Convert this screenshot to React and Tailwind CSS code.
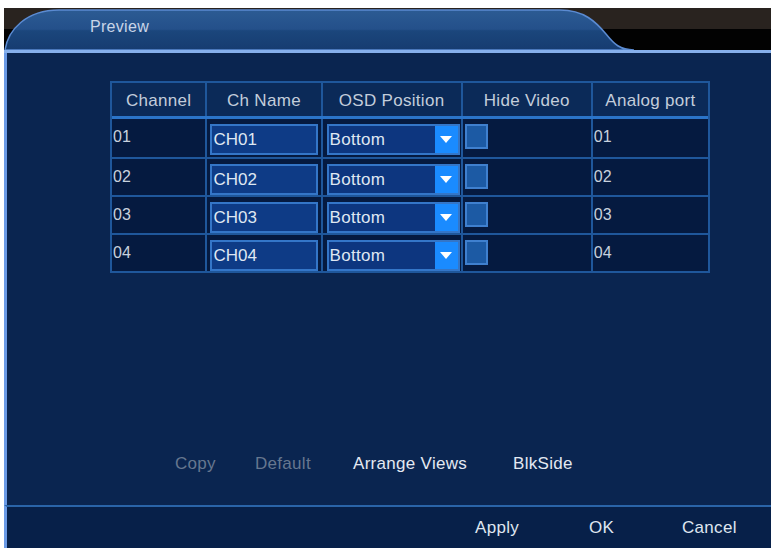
import React from 'react';

// ── Table data ─────────────────────────────────────────
const COLUMNS = [
  { label: 'Channel', w: 'w-[94px]' },
  { label: 'Ch Name', w: 'w-[116px]' },
  { label: 'OSD Position', w: 'w-[141px]' },
  { label: 'Hide Video', w: 'w-[131px]' },
  { label: 'Analog port', w: 'w-[118px]' },
];

const ROWS = ['01', '02', '03', '04'];

function TabHeader() {
  return (
    <div className="relative h-[42px] bg-[#020202]">
      {/* tab drawing */}
      <svg className="absolute inset-0" width="767" height="42" viewBox="0 0 767 42">
        <defs>
          <linearGradient id="tabFill" x1="0" y1="0" x2="0" y2="1">
            <stop offset="0" stopColor="#2c5b93" />
            <stop offset="0.48" stopColor="#24508a" />
            <stop offset="0.52" stopColor="#1b467c" />
            <stop offset="1" stopColor="#163c70" />
          </linearGradient>
        </defs>
        <rect x="0" y="0" width="767" height="21" fill="#29231f" />
        <path
          d="M1,42 C4,22 22,2 55,2 L556,2 C580,2 592,14 602,26 C610,36 616,42 630,42 Z"
          fill="url(#tabFill)"
          stroke="#5b8bd2"
          strokeWidth="1.5"
        />
      </svg>
      <div className="relative pl-[86px] pt-[11px] text-[16px] leading-none tracking-[0.3px] text-[#c9d5e8]">
        Preview
      </div>
    </div>
  );
}

function NameInput({ value }) {
  return (
    <div className="ml-[3px] mt-[5px] flex h-[31px] w-[108px] items-center border-2 border-[#3476c8] bg-[#0e3b86] pl-[1px] text-[17px] text-[#dfe7f2]">
      {value}
    </div>
  );
}

function OsdSelect() {
  return (
    <div className="ml-[4px] mt-[5px] flex h-[31px] w-[133px] border-2 border-[#3476c8] bg-[#0d367f]">
      <span className="flex-1 self-center pl-[1px] text-[17px] tracking-[0.3px] text-[#dfe7f2]">Bottom</span>
      <span className="flex w-[23px] items-center justify-center bg-[#1a8bff]">
        <svg width="12" height="8" viewBox="0 0 12 8">
          <path d="M0,0 L12,0 L6,7 Z" fill="#ffffff" />
        </svg>
      </span>
    </div>
  );
}

function CheckBox() {
  return <div className="ml-[2px] mt-[5px] h-[25px] w-[23px] border-2 border-[#3f80cf] bg-[#1c5aa4]" />;
}

export default function App() {
  return (
    <div
      className="flex h-[548px] w-[773px] flex-col overflow-hidden bg-white pl-[4px] pr-[2px] pt-[8px]"
      style={{ fontFamily: '"Liberation Sans", Arial, sans-serif' }}
    >
      <TabHeader />
      <div className="h-[3px] bg-[#86b0ec]" />

      {/* Body */}
      <div className="flex flex-1 flex-col border-l-[3px] border-[#6a9ae6] bg-[#0a2550]">
        {/* Table */}
        <div className="ml-[103px] mt-[28px] w-[600px] border-2 border-[#1f579b]">
          <div className="flex h-[36px] border-b-[3px] border-[#2b74c8] bg-[#0b2a58]">
            {COLUMNS.map((c, i) => (
              <div
                key={c.label}
                className={`${c.w} flex items-center justify-center pt-[2px] text-[17px] tracking-[0.3px] text-[#c3cddb] ${i > 0 ? 'border-l-2 border-[#1f579b]' : ''}`}
              >
                {c.label}
              </div>
            ))}
          </div>
          {ROWS.map((n, r) => (
            <div key={n} className={`flex h-[38px] bg-[#051a40] ${r > 0 ? 'border-t-2 border-[#1f579b]' : ''}`}>
              <div className="w-[94px] pl-[1px] pt-[6px] text-[16px] text-[#c8d1de]">{n}</div>
              <div className="w-[116px] border-l-2 border-[#1f579b]">
                <NameInput value={`CH${n}`} />
              </div>
              <div className="w-[141px] border-l-2 border-[#1f579b]">
                <OsdSelect />
              </div>
              <div className="w-[131px] border-l-2 border-[#1f579b]">
                <CheckBox />
              </div>
              <div className="w-[118px] border-l-2 border-[#1f579b] pl-[1px] pt-[6px] text-[16px] text-[#c8d1de]">{n}</div>
            </div>
          ))}
        </div>

        {/* Action buttons */}
        <div className="mt-auto mb-[21px] flex h-[40px] items-center pl-[168px] text-[17px] tracking-[0.3px]">
          <span className="w-[80px] text-[#66778f]">Copy</span>
          <span className="w-[98px] text-[#66778f]">Default</span>
          <span className="w-[160px] text-[#e3e9f2]">Arrange Views</span>
          <span className="text-[#e3e9f2]">BlkSide</span>
        </div>
      </div>

      {/* Footer */}
      <div className="flex h-[43px] items-center border-l-[3px] border-t-2 border-[#2a64a8] border-l-[#6a9ae6] bg-[#072049] pl-[468px] text-[17px] tracking-[0.3px] text-[#dfe6f0]">
        <span className="w-[114px]">Apply</span>
        <span className="w-[93px]">OK</span>
        <span>Cancel</span>
      </div>
    </div>
  );
}
